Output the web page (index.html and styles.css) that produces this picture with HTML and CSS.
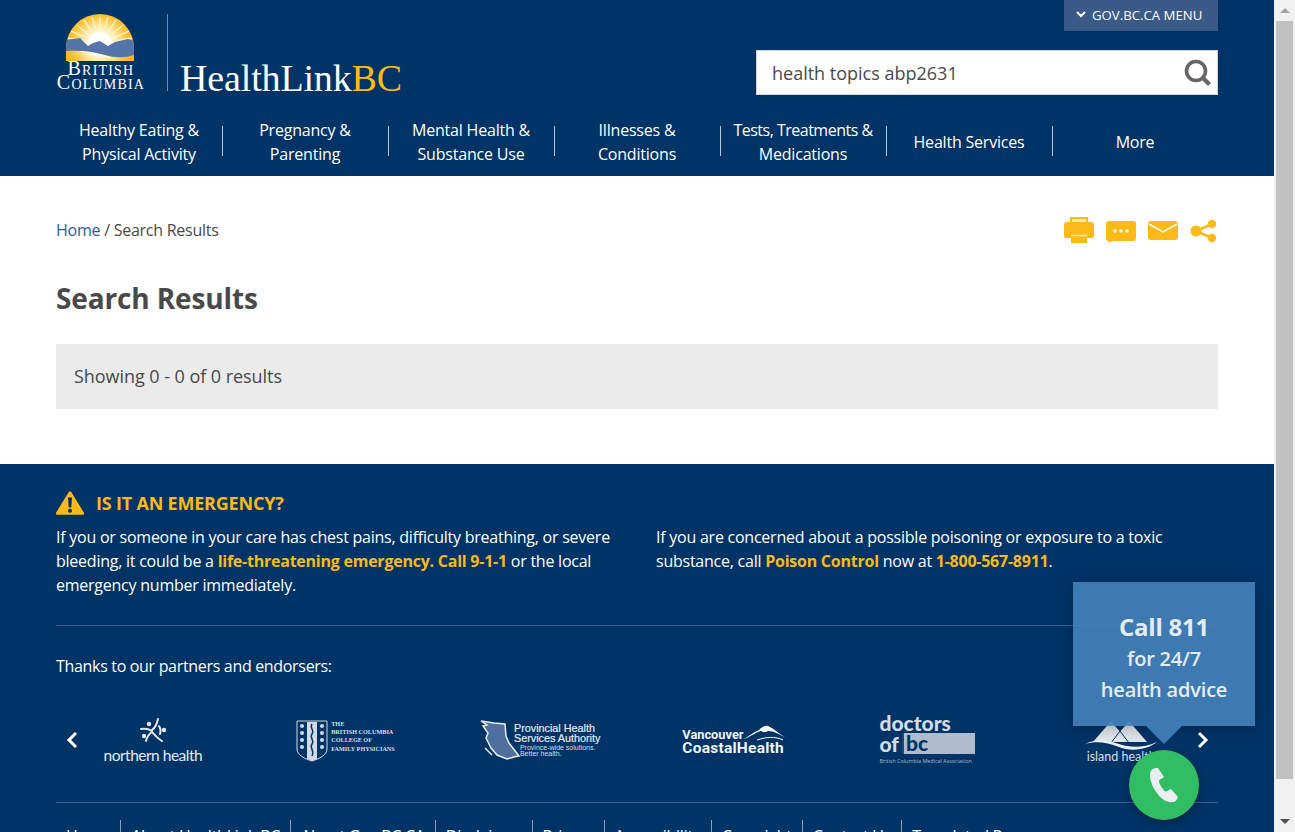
FILE: index.html
```html
<!DOCTYPE html>
<html lang="en">
<head>
<meta charset="utf-8">
<title>Search Results - HealthLinkBC</title>
<link rel="stylesheet" href="styles.css">
</head>
<body>
<div class="window">
  <div class="page">
    <header class="site-header">
      <div class="masthead">
        <a class="brand">
          <div class="bc-logo">
            <svg class="bc-sun" width="70" height="47" viewBox="0 0 70 47">
              <defs>
                <clipPath id="dome"><path d="M1 47V34a34 34 0 0 1 68 0v13z"/></clipPath>
                <radialGradient id="glow" gradientUnits="userSpaceOnUse" cx="35" cy="30" r="36">
                  <stop offset="0" stop-color="#fff"/><stop offset=".4" stop-color="#fff3c4"/><stop offset=".75" stop-color="#fdc63f"/><stop offset="1" stop-color="#f9b31a"/>
                </radialGradient>
              </defs>
              <g clip-path="url(#dome)">
                <rect width="70" height="47" fill="url(#glow)"/>
                <g stroke="#fff6d2" stroke-width="1.500" opacity=".85">
                  <path d="M35 30L35 3M35 30L27 3M35 30L43 3M35 30L19 6M35 30L51 6M35 30L12 11M35 30L58 11M35 30L6 17M35 30L64 17M35 30L3 24M35 30L67 24"/>
                </g>
                <circle cx="35" cy="30" r="12" fill="#fff"/>
                <path d="M16 32l10-6 9 3 9-3 10 6v6H16z" fill="#fff"/>
                <path d="M1 26L15 24 23 32 28 29 35 27 43 32 50 28 63 25 69 27V41C60 44 50 44 40 41 28 37 12 36 1 37z" fill="#5475a7"/>
              </g>
            </svg>
            <div class="bc-word">British<br>Columbia</div>
          </div>
          <div class="brand-name">HealthLink<span class="brand-bc">BC</span></div>
        </a>
        <div class="tools">
          <button class="gov-menu">
            <svg width="10" height="7" viewBox="0 0 10 7"><path d="M1 1l4 4 4-4" fill="none" stroke="#fff" stroke-width="2"/></svg>
            GOV.BC.CA MENU
          </button>
          <div class="search">
            <span class="search-text">health topics abp2631</span>
            <svg width="28" height="28" viewBox="0 0 28 28"><circle cx="12" cy="12" r="9.500" fill="none" stroke="#666" stroke-width="3.600"/><path d="M18.500 18.500l7 7" stroke="#666" stroke-width="4.200"/></svg>
          </div>
        </div>
      </div>
      <nav class="main-nav">
        <a class="nav-item">Healthy Eating &amp;<br>Physical Activity</a>
        <a class="nav-item">Pregnancy &amp;<br>Parenting</a>
        <a class="nav-item">Mental Health &amp;<br>Substance Use</a>
        <a class="nav-item">Illnesses &amp;<br>Conditions</a>
        <a class="nav-item"><span><span class="nav-tight">Tests, Treatments &amp;</span><br>Medications</span></a>
        <a class="nav-item">Health Services</a>
        <a class="nav-item">More</a>
      </nav>
    </header>

    <main class="content">
      <div class="crumb-row">
        <div class="breadcrumb"><a class="crumb-link">Home</a> / Search Results</div>
        <div class="page-tools">
          <svg width="30" height="28" viewBox="0 0 30 28"><path d="M7 2h16v6H7z" fill="#fde7a6" stroke="#fcba19" stroke-width="2"/><path d="M3 6h24a3 3 0 0 1 3 3v11a2 2 0 0 1-2 2H2a2 2 0 0 1-2-2V9a3 3 0 0 1 3-3z" fill="#fcba19"/><path d="M7 19h16v8H7z" fill="#fcba19"/><path d="M7 19.500h16" stroke="#fde7a6" stroke-width="1.500"/></svg>
          <svg width="30" height="28" viewBox="0 0 30 28"><path d="M3 5h24a3 3 0 0 1 3 3v14a3 3 0 0 1-3 3H7l-6 2 2-2a3 3 0 0 1-3-3V8a3 3 0 0 1 3-3z" fill="#fcba19"/><circle cx="9" cy="15" r="1.700" fill="#fff"/><circle cx="15" cy="15" r="1.700" fill="#fff"/><circle cx="21" cy="15" r="1.700" fill="#fff"/></svg>
          <svg width="30" height="28" viewBox="0 0 30 28"><path d="M3 5h24a3 3 0 0 1 3 3v13a3 3 0 0 1-3 3H3a3 3 0 0 1-3-3V8a3 3 0 0 1 3-3z" fill="#fcba19"/><path d="M1 8l14 8 14-8" fill="none" stroke="#fff" stroke-width="1.500"/></svg>
          <svg width="28" height="28" viewBox="0 0 28 28"><path d="M6 15L22 8M6 15l16 7" stroke="#fcba19" stroke-width="3"/><circle cx="6" cy="15" r="5.500" fill="#fcba19"/><circle cx="22" cy="8" r="4.200" fill="#fcba19"/><circle cx="22" cy="22" r="4.200" fill="#fcba19"/></svg>
        </div>
      </div>
      <h1 class="title">Search Results</h1>
      <div class="result-bar">Showing 0 - 0 of 0 results</div>
    </main>

    <footer class="site-footer">
      <h2 class="emergency-head">
        <svg width="28" height="24" viewBox="0 0 28 24"><path d="M14 1.500L27 22.500H1z" fill="#fcba19" stroke="#fcba19" stroke-width="2.500" stroke-linejoin="round"/><path d="M12 6.500h4l-.7 10h-2.600z" fill="#003366"/><circle cx="14" cy="19.700" r="2" fill="#003366"/></svg>
        IS IT AN EMERGENCY?
      </h2>
      <div class="emergency-cols">
        <p class="emergency-text">If you or someone in your care has chest pains, difficulty breathing, or severe bleeding, it could be a <b class="hl">life-threatening emergency. Call 9-1-1</b> or the local emergency number immediately.</p>
        <p class="emergency-text">If you are concerned about a possible poisoning or exposure to a toxic substance, call <b class="hl">Poison Control</b> now at <b class="hl">1-800-567-8911</b>.</p>
      </div>
      <div class="partners">
        <p class="partners-head">Thanks to our partners and endorsers:</p>
        <div class="carousel">
          <svg class="arrow arrow-left" width="12" height="18" viewBox="0 0 12 18"><path d="M10 2L3 9l7 7" fill="none" stroke="#fff" stroke-width="3"/></svg>
          <div class="logo-cell">
            <div class="logo-nh">
              <svg width="26" height="28" viewBox="0 0 26 28"><g fill="none" stroke="#e4e9ef" stroke-width="2" stroke-linecap="round"><path d="M18 1c-1 5-3 9-6 11"/><path d="M1 11c4-.5 8 0 11 2"/><path d="M19 8c2 3 2 5 1 8"/><path d="M6 23c1-4 3-7 6-9"/><path d="M12 14c3 3 6 7 10 9"/></g><circle cx="9" cy="6" r="2.200" fill="#e4e9ef"/><circle cx="24" cy="12" r="2.200" fill="#e4e9ef"/><circle cx="4" cy="18" r="2.200" fill="#e4e9ef"/></svg>
              <span class="nh-name">northern health</span>
            </div>
          </div>
          <div class="logo-cell">
            <div class="logo-cfp">
              <svg width="32" height="42" viewBox="0 0 32 42"><path d="M1 1h30v28c0 6-8 10-15 12C9 39 1 35 1 29z" fill="none" stroke="#d3dae4" stroke-width="1"/><path d="M11 2h10v37l-5 2-5-2z" fill="#d3dae4"/><path d="M16 4c-3 4 3 6 0 10s3 6 0 10 3 6 0 12" fill="none" stroke="#003366" stroke-width="1.500"/><g fill="#d3dae4"><circle cx="6" cy="6" r="2"/><circle cx="6" cy="13" r="2"/><circle cx="6" cy="20" r="2"/><circle cx="6" cy="27" r="2"/><circle cx="26" cy="6" r="2"/><circle cx="26" cy="13" r="2"/><circle cx="26" cy="20" r="2"/><circle cx="26" cy="27" r="2"/></g></svg>
              <span class="cfp-name">THE<br>BRITISH COLUMBIA<br>COLLEGE OF<br>FAMILY PHYSICIANS</span>
            </div>
          </div>
          <div class="logo-cell">
            <div class="logo-phsa">
              <svg class="phsa-map" width="41" height="40" viewBox="0 0 41 40"><path d="M1 1l13 2 11 1 1 12 3 7 10 13-5 1-7 2-10-4-6-7-5-10 2-5-5-7 4-1z" fill="#4e6f9f" stroke="#e9edf2" stroke-width="1.500"/><path d="M5 28l4 4 3 3" fill="none" stroke="#e9edf2" stroke-width="1.500"/></svg>
              <div class="phsa-text"><span class="phsa-name">Provincial Health<br>Services Authority</span><span class="phsa-tag">Province-wide solutions.<br>Better health.</span></div>
            </div>
          </div>
          <div class="logo-cell">
            <div class="logo-vch">
              <svg class="vch-peak" width="42" height="17" viewBox="0 0 42 17"><path d="M0 15C6 13 10 8 16 6c3-3 6-5 9-4 5 2 10 7 17 11-7-3-11-6-17-6-3 2-5 1-7 0-7 2-10 6-18 8z" fill="#fff"/><path d="M14 16c9-3 18-4 26 0" fill="none" stroke="#fff" stroke-width="1"/></svg>
              <span class="vch-top">Vancouver</span>
              <span class="vch-bottom">CoastalHealth</span>
            </div>
          </div>
          <div class="logo-cell">
            <div class="logo-doc">
              <div class="doc-word">doctors</div>
              <div class="doc-row"><span class="doc-of">of</span><span class="doc-box"><span class="doc-bc">bc</span></span></div>
              <div class="doc-tag">British Columbia Medical Association</div>
            </div>
          </div>
          <div class="logo-cell">
            <div class="logo-ih">
              <svg width="72" height="30" viewBox="0 0 72 30"><path d="M8 22L26 1l9 10 9-10 18 21z" fill="#dfe5ea"/><path d="M26 1l9 10-9 12M44 1l-9 10 9 12" stroke="#003366" stroke-width="1" fill="none"/><path d="M0 24c12-6 22-4 34 0s24 4 38-2c-10 8-26 10-38 5S10 21 0 24z" fill="#eef1f4"/></svg>
              <span class="ih-name">island health</span>
            </div>
          </div>
          <svg class="arrow arrow-right" width="12" height="18" viewBox="0 0 12 18"><path d="M2 2l7 7-7 7" fill="none" stroke="#fff" stroke-width="3"/></svg>
        </div>
      </div>
      <nav class="footer-links">
        <a class="foot-link">Home</a>
        <a class="foot-link">About HealthLink BC</a>
        <a class="foot-link">About Gov.BC.CA</a>
        <a class="foot-link">Disclaimer</a>
        <a class="foot-link">Privacy</a>
        <a class="foot-link">Accessibility</a>
        <a class="foot-link">Copyright</a>
        <a class="foot-link">Contact Us</a>
        <a class="foot-link foot-last">Translated Resources</a>
      </nav>
    </footer>

    <aside class="call-widget">
      <div class="call-bubble">
        <strong class="call-big">Call 811</strong>
        <span class="call-small">for 24/7</span>
        <span class="call-small">health advice</span>
      </div>
      <div class="call-button">
        <svg width="30" height="36" viewBox="0 0 30 36"><path d="M6 1C3 2 1 4 1 8c0 6 3 13 7 18 4 6 10 10 16 9 2 0 4-2 5-5l-7-8-4 2c-2 1-3 0-4-2-2-2-4-6-4-8 0-1 1-2 2-2l3-2L9 1z" fill="#e9eff1"/></svg>
      </div>
    </aside>
  </div>
  <div class="scrollbar">
    <div class="sb-btn"><span class="sb-up"></span></div>
    <div class="sb-track"><div class="sb-thumb"></div></div>
    <div class="sb-btn"><span class="sb-down"></span></div>
  </div>
</div>
</body>
</html>
```
FILE: styles.css
```css
* { box-sizing: border-box; }
html, body { margin: 0; height: 832px; overflow: hidden; }
body { font-family: "Open Sans", "Noto Sans", sans-serif; font-size: 16px; color: #494949; background: #fff; }
.window { display: flex; height: 832px; }
.page { position: relative; flex: 1; min-width: 0; height: 832px; overflow: hidden; }

.site-header { height: 176px; background: #003366; padding: 0 56px; color: #fff; }
.masthead { display: flex; justify-content: space-between; height: 118px; }
.brand { display: flex; padding-top: 14px; }
.bc-logo { width: 112px; height: 77px; border-right: 1px solid #9c8c4a; margin-right: 12px; }
.bc-sun { display: block; margin-left: 9px; }
.bc-word { width: 90px; font-family: "Liberation Serif", serif; font-size: 20px; line-height: 14px; text-align: center; font-variant: small-caps; letter-spacing: 1.200px; color: #fff; }
.brand-name { align-self: flex-end; margin-bottom: 20px; font-family: "Liberation Serif", serif; font-size: 38px; line-height: 40px; letter-spacing: -.15px; color: #fff; }
.brand-bc { color: #fcba19; }
.tools { display: flex; flex-direction: column; align-items: flex-end; }
.gov-menu { display: flex; align-items: center; gap: 6px; width: 154px; height: 31px; padding: 0 0 2px 12px; border: 0; background: #3c5a88; color: #fff; font: 13.200px "Open Sans", sans-serif; }
.search { display: flex; align-items: center; justify-content: space-between; width: 462px; height: 45px; margin-top: 19px; padding: 0 5px 0 15px; border: 1px solid #d5d5d5; background: #fff; color: #494949; font-size: 18px; }
.main-nav { display: grid; grid-template-columns: repeat(7, 1fr); height: 48px; }
.nav-item { display: flex; align-items: center; justify-content: center; height: 48px; text-align: center; font-size: 16px; line-height: 24px; letter-spacing: -.2px; color: #fff; position: relative; }
.nav-tight { letter-spacing: -.5px; }
.nav-item + .nav-item::before { content: ""; position: absolute; left: 0; top: 8px; height: 30px; border-left: 1px solid #b9c4d4; }

.content { height: 288px; padding: 0 56px; }
.crumb-row { display: flex; justify-content: space-between; align-items: center; height: 107px; }
.breadcrumb { font-size: 16px; letter-spacing: -.25px; color: #494949; }
.crumb-link { color: #1f5f9f; }
.page-tools { display: flex; gap: 12px; }
.title { margin: 0; font-size: 28px; line-height: 30px; font-weight: 700; color: #494949; letter-spacing: -.13px; }
.result-bar { display: flex; align-items: center; height: 65px; margin-top: 31px; padding: 0 0 2px 18px; background: #ebebeb; font-size: 18px; letter-spacing: -.05px; }

.site-footer { height: 368px; background: #003366; padding: 0 56px; color: #fff; }
.emergency-head { display: flex; align-items: center; gap: 12px; margin: 0; padding-top: 17px; height: 61px; font-size: 18px; font-weight: 700; color: #fcba19; letter-spacing: -.2px; }
.emergency-cols { display: grid; grid-template-columns: 600px 562px; }
.emergency-text { margin: 0; width: 562px; font-size: 16px; line-height: 24px; letter-spacing: -.24px; color: #fff; }
.hl { color: #fcba19; font-weight: 700; }
.partners { margin-top: 28px; border-top: 1px solid #3a5f8c; border-bottom: 1px solid #3a5f8c; height: 178px; padding-top: 28px; }
.partners-head { margin: 0; font-size: 16px; line-height: 24px; letter-spacing: -.32px; }
.carousel { position: relative; display: grid; grid-template-columns: repeat(6, 1fr); margin-top: 21px; height: 72px; align-items: center; }
.arrow { position: absolute; top: 32px; }
.arrow-left { left: 10px; }
.arrow-right { right: 9px; }
.logo-cell { display: flex; justify-content: center; align-items: center; height: 72px; }

.logo-nh { display: flex; flex-direction: column; align-items: center; margin-top: 12px; color: #e4e9ef; }
.logo-nh svg { display: block; }
.nh-name { font-size: 15.500px; line-height: 18px; letter-spacing: -.5px; font-family: "Lato", sans-serif; }
.logo-cfp { display: flex; gap: 3px; align-items: flex-start; margin: 12px 0 0 -2px; }
.cfp-name { font-family: "Liberation Serif", serif; font-weight: 700; font-size: 6.200px; line-height: 8.200px; color: #d9dfe8; }
.logo-phsa { display: flex; align-items: center; margin-top: 10px; }
.phsa-map { flex: none; }
.phsa-text { display: flex; flex-direction: column; margin-left: -7px; }
.phsa-name { font-family: "Liberation Sans", sans-serif; font-size: 10.800px; line-height: 10px; color: #e4e9ef; -webkit-text-stroke: .2px #e4e9ef; white-space: nowrap; }
.phsa-tag { font-family: "Liberation Sans", sans-serif; font-size: 7px; line-height: 6.500px; margin-left: 6px; margin-top: 2px; color: #d9dfe8; white-space: nowrap; }
.logo-vch { position: relative; display: flex; flex-direction: column; width: 103px; margin-top: 10px; padding-top: 4px; }
.vch-peak { position: absolute; right: 0; top: 0; }
.vch-top { font-family: "Roboto", sans-serif; font-size: 12.800px; line-height: 13px; font-weight: 700; color: #f2f4f7; }
.vch-bottom { font-family: "Roboto", sans-serif; font-size: 15.500px; line-height: 15px; font-weight: 700; color: #f2f4f7; letter-spacing: .25px; white-space: nowrap; }
.logo-doc { display: flex; flex-direction: column; color: #d3dae4; width: 96px; margin-top: 8px; }
.doc-word { font-family: "Lato", sans-serif; font-weight: 900; font-size: 21px; line-height: 18px; }
.doc-row { display: flex; align-items: center; gap: 3px; margin-top: 1px; }
.doc-of { font-family: "Lato", sans-serif; font-weight: 900; font-size: 21px; line-height: 21px; }
.doc-box { display: block; flex: 1; height: 21px; padding-left: 2px; border-left: 2px solid #1d4674; background: #aebccd; }
.doc-bc { display: block; font-family: "Lato", sans-serif; font-weight: 900; font-size: 21px; line-height: 19px; color: #003366; }
.doc-tag { margin-top: 4px; font-size: 5.400px; line-height: 7px; white-space: nowrap; color: #aebccd; }
.logo-ih { display: flex; flex-direction: column; align-items: center; margin-top: 14px; }
.ih-name { font-family: "Lato", sans-serif; font-size: 12.500px; line-height: 14px; color: #d9dfe6; }

.footer-links { display: flex; margin-top: 17px; }
.foot-link { padding: 4px 10px 0; font-size: 16px; line-height: 24px; letter-spacing: -.25px; white-space: nowrap; color: #fff; border-right: 1px solid #8b9db8; }
.foot-last { border-right: 0; }

.call-widget { position: absolute; left: 1073px; top: 582px; width: 182px; height: 238px; display: flex; flex-direction: column; align-items: center; }
.call-bubble { position: relative; display: flex; flex-direction: column; align-items: center; justify-content: center; width: 182px; height: 144px; padding-top: 6px; background: rgba(69, 130, 186, .9); box-shadow: 0 3px 12px rgba(0,0,0,.25); color: #e6ecf3; }
.call-bubble::after { content: ""; position: absolute; left: 73px; top: 144px; border-style: solid; border-width: 18px 18px 0; border-color: #3e7ab2 transparent transparent; }
.call-big { font-size: 24px; line-height: 33px; font-weight: 700; letter-spacing: -.2px; }
.call-small { font-size: 20px; line-height: 31px; font-weight: 600; letter-spacing: -.2px; }
.call-button { display: flex; align-items: center; justify-content: center; width: 70px; height: 70px; margin-top: 24px; border-radius: 50%; background: #30bd64; box-shadow: 0 3px 10px rgba(0,0,0,.3); }

.scrollbar { display: flex; flex-direction: column; width: 21px; background: #f1f1f1; }
.sb-btn { display: flex; align-items: center; justify-content: center; height: 21px; }
.sb-up { border-style: solid; border-width: 0 5px 5px; border-color: transparent transparent #a3a3a3; }
.sb-down { border-style: solid; border-width: 5px 5px 0; border-color: #505050 transparent transparent; }
.sb-track { flex: 1; padding-left: 2px; }
.sb-thumb { width: 17px; height: 758px; background: #c1c1c1; }
```
